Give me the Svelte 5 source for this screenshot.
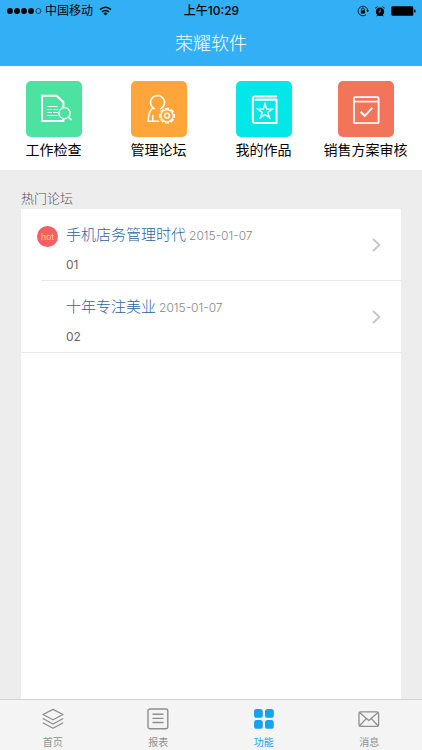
<script>
  // Shortcuts on the top of the page
  let shortcuts = [
    { id: 'check', label: '工作检查' },
    { id: 'manage', label: '管理论坛' },
    { id: 'works', label: '我的作品' },
    { id: 'audit', label: '销售方案审核' },
  ];

  // Hot forum posts
  let posts = [
    { title: '手机店务管理时代', date: '2015-01-07', text: '01', hot: true },
    { title: '十年专注美业', date: '2015-01-07', text: '02', hot: false },
  ];

  let tabs = [
    { id: 'home', label: '首页' },
    { id: 'report', label: '报表' },
    { id: 'function', label: '功能' },
    { id: 'message', label: '消息' },
  ];

  let activeTab = 'function';

  // Teeth around the gear
  let teeth = [0, 45, 90, 135, 180, 225, 270, 315];
</script>

<div class="page">
  <header>
    <div class="status">
      <div class="carrier">
        <svg width="35" height="8" viewBox="0 0 35 8">
          {#each [3, 10, 17, 24] as x (x)}
            <circle cx={x} cy="4" r="2.9" />
          {/each}
          <circle cx="31.4" cy="4" r="2.5" fill="none" stroke="#000" stroke-width="0.6" />
        </svg>
        <span>中国移动</span>
        <svg class="wifi" width="13" height="10" viewBox="0 0 13 10">
          <path d="M1 3.6Q6.5-1.2 12 3.6M3 5.9q3.5-2.8 7 0" fill="none" stroke="#000" stroke-width="1.5" />
          <path d="M4.4 7.3q2.1-1.6 4.2 0L6.5 9.5z" />
        </svg>
      </div>
      <div class="time">上午10:29</div>
      <div class="indicators">
        <svg width="12" height="12" viewBox="0 0 12 12">
          <path d="M10.7 5.5A4.8 4.8 0 1 0 9 9.7" fill="none" stroke="#000" stroke-width="0.8" />
          <path d="M9.1 5.2h2.9l-1.4 2z" />
          <rect x="3.8" y="5.2" width="4.2" height="3.2" rx="0.4" />
          <path d="M4.6 5.4V4.2a1.3 1.3 0 0 1 2.6 0v1.2" fill="none" stroke="#000" stroke-width="0.8" />
        </svg>
        <svg width="10" height="11" viewBox="0 0 10 11">
          <circle cx="5" cy="5.8" r="4.2" />
          <path d="M.3 2.8A2 2 0 0 1 3 .7zM9.7 2.8A2 2 0 0 0 7 .7zM1.2 10.4l1.3-2 1 1zM8.8 10.4l-1.3-2-1 1z" />
          <path d="M5.2 3.3V6H3.3" fill="none" stroke="#33b0f5" stroke-width="0.9" />
        </svg>
        <svg width="25" height="10" viewBox="0 0 25 10">
          <rect x="0.3" y="0.3" width="22" height="9.4" rx="1.2" />
          <path d="M23.2 3.2q1.5.4 1.5 1.8t-1.5 1.8z" />
        </svg>
      </div>
    </div>
    <h1>荣耀软件</h1>
  </header>

  <nav class="shortcuts">
    {#each shortcuts as item (item.id)}
      <button class="shortcut">
        <span class="tile {item.id}">
          <svg width="56" height="56" viewBox="0 0 56 56" fill="none" stroke="#fff" stroke-width="1.6">
            {#if item.id === 'check'}
              <path d="M37.4 26V21L30.5 14.8H16V40H37.4V38" stroke-width="2" />
              <path d="M21.5 25.5h10M21.5 28.5h4.5M27 28.5h5M21.5 31.5h4.5M27 31.5h5M21.5 34.5h10" stroke-width="1" />
              <circle cx="38.5" cy="32.2" r="5.6" stroke-width="1.3" />
              <path d="M42.4 36.2l3.2 3" stroke-width="1.6" />
            {:else if item.id === 'manage'}
              <path d="M23.2 27.6A7 7 0 1 1 29.8 27.6M22.3 26.6C18.5 29 17.2 33 17.2 40.3H27.5M21.7 40.3V34.5" stroke-linecap="round" />
              {#each teeth as angle (angle)}
                <path d="M34.6 28.6v-1.2h2.8v1.2" transform="rotate({angle} 36 34.7)" stroke-width="1.2" />
              {/each}
              <circle cx="36" cy="34.7" r="6.1" stroke-width="1.2" />
              <circle cx="36" cy="34.7" r="2.4" stroke-width="1.5" />
            {:else if item.id === 'works'}
              <path d="M41 15.4H19.4Q16.8 15.4 16.8 17.6V40Q16.8 42 19.4 42H40.6V18.8H18.5" stroke-width="1.9" stroke-linejoin="round" />
              <path d="M20 17.1h20.5" stroke-width="0.6" />
              <path d="M29 22.8l1.7 5.3h5.6l-4.5 3.3 1.7 5.3-4.5-3.3-4.5 3.3 1.7-5.3-4.5-3.3h5.6z" stroke-width="1.4" />
            {:else}
              <rect x="16" y="16.2" width="24.6" height="26" rx="1" stroke-width="1.8" />
              <path d="M16 20.6h24.6" />
              <path d="M22.6 30.8l4.2 4 7.6-7.9" stroke-width="1.9" />
            {/if}
          </svg>
        </span>
        <span>{item.label}</span>
      </button>
    {/each}
  </nav>

  <main>
    <h2>热门论坛</h2>
    <ul>
      {#each posts as post (post.text)}
        <li>
          <a href="#post-{post.text}">
            <span class="mark">
              {#if post.hot}
                <span class="hot">hot</span>
              {/if}
            </span>
            <span class="body">
              <span class="line">
                <span class="title">{post.title}</span>
                <span class="date">{post.date}</span>
              </span>
              <span class="text">{post.text}</span>
            </span>
            <svg width="9" height="14" viewBox="0 0 9 14" fill="none" stroke="#c4c4c9" stroke-width="1.8">
              <path d="M1 1l6.4 6L1 13" />
            </svg>
          </a>
        </li>
      {/each}
    </ul>
  </main>

  <nav class="tabs">
    {#each tabs as tab (tab.id)}
      <button class="tab" class:active={activeTab === tab.id} on:click={() => (activeTab = tab.id)}>
        <svg width="22" height="22" viewBox="0 0 22 22" fill="none" stroke="currentColor" stroke-width="1.3" stroke-linejoin="round">
          {#if tab.id === 'home'}
            <path d="M11 1.3L21 6.5 11 11.8 1 6.5zM.8 10.5L11 16 21.2 10.5M.8 14.7L11 20.2 21.2 14.7" />
          {:else if tab.id === 'report'}
            <rect x="1" y="1" width="19.8" height="19.8" rx="2" stroke-width="1.4" />
            <path d="M5.5 6.3h11M5.5 10.4h11M5.5 14.5h11" stroke-width="1.4" />
          {:else if tab.id === 'function'}
            <g fill="currentColor" stroke="none">
              <rect x="1" y="1" width="8.8" height="8.8" rx="2.6" />
              <rect x="12" y="1" width="8.8" height="8.8" rx="2.6" />
              <rect x="1" y="12" width="8.8" height="8.8" rx="2.6" />
              <rect x="12" y="12" width="8.8" height="8.8" rx="2.6" />
            </g>
          {:else}
            <rect x="1" y="3.8" width="19.6" height="14.6" rx="1.6" />
            <path d="M1.6 4.4L10.8 12.6 20 4.4M1.6 17.8L8.2 10.6M20 17.8L13.4 10.6" />
          {/if}
        </svg>
        <span>{tab.label}</span>
      </button>
    {/each}
  </nav>
</div>

<style>
  :global(body) {
    margin: 0;
    background: #ededed;
  }

  .page {
    display: flex;
    flex-direction: column;
    min-height: 100vh;
    font-family: Inter, "Noto Sans CJK SC", sans-serif;
    color: #000;
  }

  button {
    padding: 0;
    border: 0;
    background: none;
    font-family: inherit;
    color: inherit;
    cursor: pointer;
  }

  svg {
    display: block;
  }

  header {
    background: #33b0f5;
  }

  .status {
    display: grid;
    grid-template-columns: 1fr auto 1fr;
    align-items: center;
    height: 20px;
    padding: 2px 6px 0 7px;
    box-sizing: border-box;
    font-size: 12px;
    line-height: 18px;
  }

  .carrier,
  .indicators {
    display: flex;
    align-items: center;
    gap: 6px;
  }

  .carrier {
    gap: 3px;
  }

  .wifi {
    margin-left: 3px;
  }

  .time {
    font-weight: 500;
  }

  .indicators {
    justify-content: flex-end;
  }

  h1 {
    margin: 0;
    padding-top: 2px;
    font-size: 18px;
    font-weight: 300;
    line-height: 44px;
    text-align: center;
    color: #fff;
  }

  .shortcuts {
    display: grid;
    grid-template-columns: repeat(3, 1fr) 99px;
    padding: 15px 7px 7px 1px;
    background: #fff;
  }

  .shortcut {
    display: flex;
    flex-direction: column;
    align-items: center;
    font-size: 14px;
    line-height: 26px;
    white-space: nowrap;
  }

  .tile {
    border-radius: 5px;
  }

  .check {
    background: #4ce2a0;
  }

  .manage {
    background: #ffa53a;
  }

  .works {
    background: #04e7e9;
  }

  .audit {
    background: #f2745b;
  }

  main {
    flex: 1;
    display: flex;
    flex-direction: column;
    padding: 18px 21px 0;
  }

  h2 {
    margin: 0;
    font-size: 13px;
    font-weight: 300;
    line-height: 21px;
    color: #555;
  }

  ul {
    flex: 1;
    margin: 0;
    padding: 0;
    list-style: none;
    background: #fff;
  }

  /* the line between posts is inset, the last one runs the full width */
  li {
    padding-bottom: 1px;
    background: linear-gradient(#e8e8e8, #e8e8e8) 20px 100% / 100% 1px no-repeat;
  }

  li:last-child {
    background-position: 0 100%;
  }

  a {
    display: flex;
    align-items: center;
    height: 71px;
    padding: 0 20px 0 16px;
    color: inherit;
    text-decoration: none;
  }

  .mark {
    align-self: flex-start;
    width: 29px;
    padding-top: 17px;
  }

  .hot {
    display: block;
    width: 21px;
    border-radius: 50%;
    background: #f55f63;
    color: #ffd36b;
    font-size: 9px;
    line-height: 21px;
    text-align: center;
  }

  .body {
    flex: 1;
    display: flex;
    flex-direction: column;
    padding-top: 6px;
  }

  .line {
    display: flex;
    align-items: baseline;
    gap: 3px;
    line-height: 34px;
  }

  .title {
    font-size: 15px;
    font-weight: 300;
    color: #2a62a2;
  }

  .date {
    font-size: 12px;
    font-weight: 300;
    color: #888;
  }

  .text {
    font-size: 12px;
    line-height: 24px;
    color: #666;
  }

  .tabs {
    display: grid;
    grid-template-columns: repeat(4, 1fr);
    border-top: 1px solid #d2d2d2;
    background: #f4f4f4;
  }

  .tab {
    display: flex;
    flex-direction: column;
    align-items: center;
    gap: 4px;
    padding: 8px 0 0;
    font-size: 10px;
    line-height: 16px;
    color: #8f8f8f;
  }

  .active {
    color: #17a1ee;
  }
</style>
